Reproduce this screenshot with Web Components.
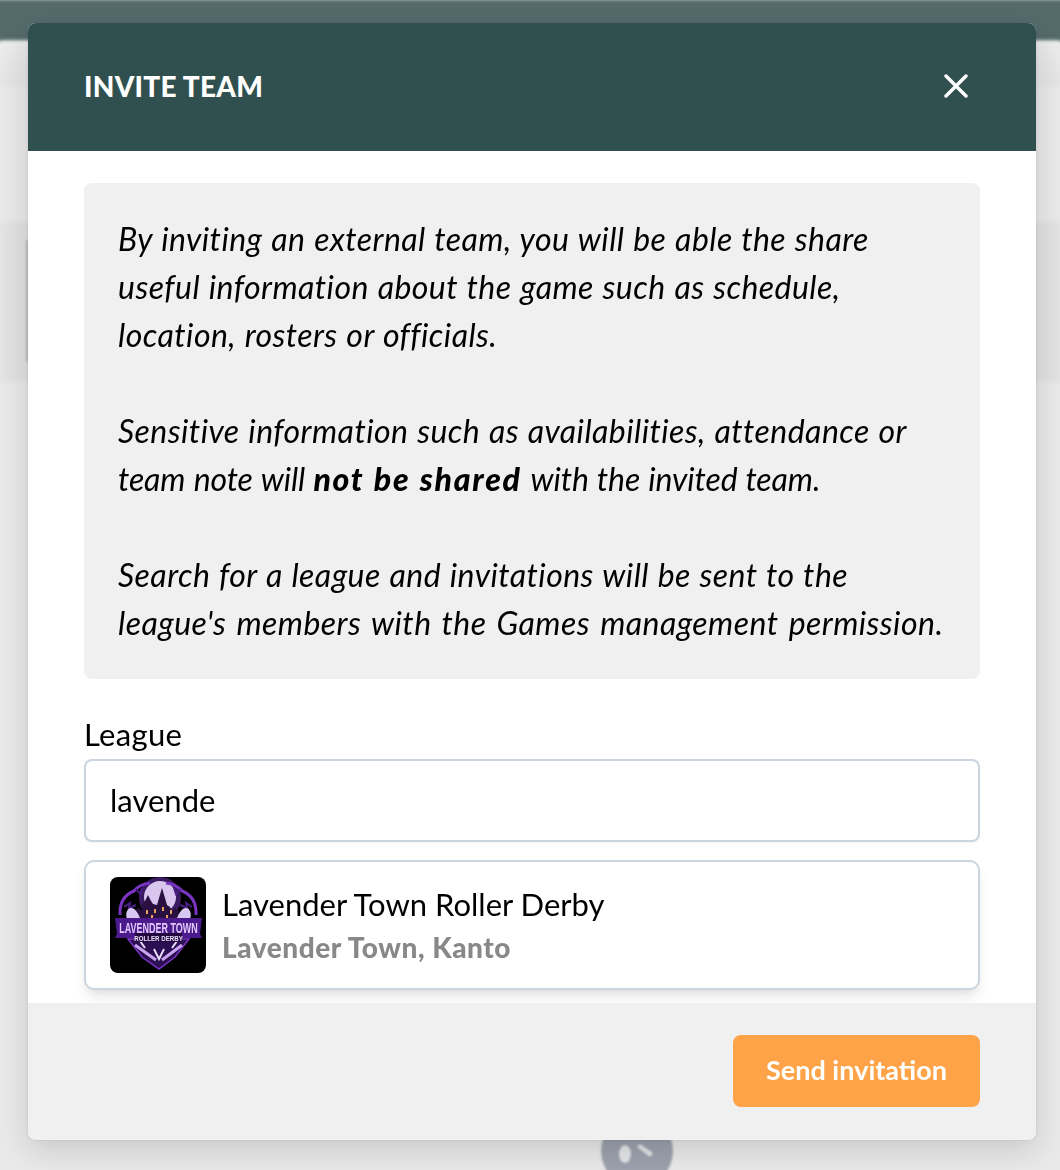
<!DOCTYPE html>
<html lang="en">
<head>
<meta charset="utf-8">
<title>Invite team</title>
<style>
  html, body { margin: 0; height: 100%; }
  body { font-family: "Lato", "Open Sans", sans-serif; background: #e9e9e9; overflow: hidden; }
  info-box b { font-weight: 900; letter-spacing: 1.75px; }
  info-box .tight { letter-spacing: -.1px; }
  info-box .wide { word-spacing: 2.2px; }
</style>
</head>
<body>
<page-backdrop></page-backdrop>
<invite-modal title="INVITE TEAM">
  <info-box>
    <p>By inviting an external team, you will be able the share<br>useful information about the game such as schedule,<br>location, rosters or officials.</p>
    <p>Sensitive information such as availabilities, attendance or<br><span class="tight">team note will </span><b>not be shared</b> <span class="tight">with the invited team.</span></p>
    <p>Search for a league and invitations will be sent to the<br><span class="wide">league's members with the Games management permission.</span></p>
  </info-box>
  <league-field label="League" value="lavende"></league-field>
  <league-option name="Lavender Town Roller Derby" place="Lavender Town, Kanto"></league-option>
  <send-button slot="footer">Send invitation</send-button>
</invite-modal>

<script>
// page behind the modal, dimmed and out of focus
class PageBackdrop extends HTMLElement {
  constructor() {
    super();
    this.attachShadow({ mode: 'open' });
    this.shadowRoot.innerHTML = `
      <style>
        :host { display: block; position: fixed; inset: 0; background: #e9e9e9; overflow: hidden; }
        .bar { height: 41px; background: #546a6b; filter: blur(1.5px); transform: scale(1.02); }
        .strip { height: 45px; background: linear-gradient(#ececec, #e3e3e3); filter: blur(2px); }
        .card { position: absolute; left: 0; top: 222px; width: 100%; height: 160px; background: #e1e1e1; filter: blur(2px); }
        .edge { position: absolute; left: 26px; top: 240px; width: 3px; height: 122px; background: #bcbcbc; filter: blur(1px); }
        .avatar { position: absolute; left: 600px; top: 1114px; filter: blur(1px); }
      </style>
      <div class="bar"></div>
      <div class="strip"></div>
      <div class="card"></div>
      <div class="edge"></div>
      <svg class="avatar" width="74" height="74" viewBox="0 0 74 74">
        <circle cx="37" cy="37" r="36" fill="#9ca1ad"/>
        <ellipse cx="25" cy="40" rx="6" ry="9" fill="#e4e5e8"/>
        <path d="M37 33l3-3 13 9-3 4z" fill="#e4e5e8"/>
      </svg>`;
  }
}

class InviteModal extends HTMLElement {
  constructor() {
    super();
    this.attachShadow({ mode: 'open' });
    this.shadowRoot.innerHTML = `
      <style>
        :host {
          display: flex;
          flex-direction: column;
          position: absolute;
          left: 28px;
          top: 23px;
          width: 1008px;
          height: 1117px;
          border-radius: 8px;
          overflow: hidden;
          background: #fff;
          box-shadow: 0 10px 30px rgba(0,0,0,.14), 0 0 3px rgba(0,0,0,.12);
        }
        header {
          flex: 0 0 128px;
          box-sizing: border-box;
          display: flex;
          align-items: center;
          justify-content: space-between;
          padding: 0 68px 2px 56px;
          background: #30504f;
          color: #fff;
        }
        h2 { margin: 0; font-size: 28px; font-weight: 900; letter-spacing: .25px; }
        svg { display: block; }
        .body { flex: 1; min-height: 0; padding: 32px 56px 0; }
        footer {
          flex: 0 0 137px;
          box-sizing: border-box;
          display: flex;
          justify-content: flex-end;
          padding: 32px 56px;
          background: #f0f0f0;
        }
      </style>
      <header>
        <h2 id="title"></h2>
        <svg width="24" height="24" viewBox="0 0 24 24" fill="none" stroke="#fff" stroke-width="3.4" stroke-linecap="round"><path d="M2 2l20 20M22 2L2 22"/></svg>
      </header>
      <div class="body"><slot></slot></div>
      <footer><slot name="footer"></slot></footer>`;
    this.shadowRoot.getElementById('title').textContent = this.getAttribute('title');
  }
}

class InfoBox extends HTMLElement {
  constructor() {
    super();
    this.attachShadow({ mode: 'open' });
    this.shadowRoot.innerHTML = `
      <style>
        :host {
          display: block;
          box-sizing: border-box;
          height: 496px;
          padding: 32px 20px 0 34px;
          border-radius: 8px;
          background: #f0f0f0;
          color: #000;
          font-style: italic;
          font-size: 32px;
          line-height: 48px;
          letter-spacing: .45px;
          word-spacing: .8px;
          white-space: nowrap;
        }
        ::slotted(p) { margin: 0 0 48px; }
        ::slotted(p:last-child) { margin-bottom: 0; }
      </style>
      <slot></slot>`;
  }
}

class LeagueField extends HTMLElement {
  constructor() {
    super();
    this.attachShadow({ mode: 'open' });
    this.shadowRoot.innerHTML = `
      <style>
        :host { display: block; margin-top: 32px; }
        label { display: block; height: 48px; font-size: 31px; line-height: 47px; letter-spacing: .3px; color: #000; }
        input {
          display: block;
          box-sizing: border-box;
          width: 100%;
          height: 83px;
          padding: 0 24px 2px;
          border: 2px solid #cbd5e0;
          border-radius: 8px;
          background: #fff;
          color: #000;
          font: 31px "Lato", "Open Sans", sans-serif;
          box-shadow: 0 1px 2px rgba(0,0,0,.05);
          outline: none;
        }
      </style>
      <label id="l"></label>
      <input id="i" type="text">`;
    this.shadowRoot.getElementById('l').textContent = this.getAttribute('label');
    this.shadowRoot.getElementById('i').value = this.getAttribute('value');
  }
}

class LeagueOption extends HTMLElement {
  constructor() {
    super();
    this.attachShadow({ mode: 'open' });
    this.shadowRoot.innerHTML = `
      <style>
        :host {
          display: flex;
          align-items: center;
          gap: 16px;
          box-sizing: border-box;
          height: 130px;
          margin-top: 18px;
          padding: 0 24px;
          border: 2px solid #cbd5e0;
          border-radius: 10px;
          background: #fff;
          box-shadow: 0 10px 15px -3px rgba(0,0,0,.1), 0 4px 6px -2px rgba(0,0,0,.05);
        }
        svg { flex: 0 0 96px; border-radius: 8px; }
        .name { font-size: 31px; line-height: 44px; color: #000; }
        .place { font-size: 28px; line-height: 42px; font-weight: 900; letter-spacing: .55px; color: #888; }
      </style>
      <svg width="96" height="96" viewBox="0 0 96 96">
        <rect width="96" height="96" fill="#000"/>
        <circle cx="50" cy="21" r="21" fill="#6a2fb0" opacity=".55"/>
        <circle cx="50" cy="20" r="16" fill="#d8c6ee"/>
        <path d="M10 38Q9 20 24 14Q30 7 40 6M86 38Q87 20 72 14Q66 7 56 6" fill="none" stroke="#7b35c4" stroke-width="3"/>
        <path d="M14 30l6-4-1 5 7-3M82 30l-6-4 1 5-7-3M26 12l4 5 2-6M70 12l-4 5-2-6" fill="none" stroke="#4a1d87" stroke-width="2"/>
        <path d="M25 44V33l4-2 3 3V27l3-3 3-6 3 6 2 3 4 1 2-7 3-10 3 10 2 7 3 2 2 4 3-3 4 3v11z" fill="#2a1040"/>
        <path d="M36 33h2v4h-2zM44 32h2v4h-2zM52 30h2v4h-2zM60 33h2v4h-2zM41 38h2v3h-2zM56 38h2v3h-2z" fill="#e8a15a"/>
        <path d="M17 42c-2-5 0-11 4-11s7 5 9 10z" fill="#d9c7f3"/>
        <path d="M80 42c2-5 0-11-4-11s-7 5-9 10z" fill="#d9c7f3"/>
        <path d="M18 62h61L65 80 49 92 32 80z" fill="#2c0f52" stroke="#7b35c4" stroke-width="1.5"/>
        <path d="M25 68l21 15M72 68L52 83" stroke="#c9a5ef" stroke-width="3"/>
        <path d="M30 64l5 7M67 64l-5 7M44 72l5 10 5-10" stroke="#e8dcf8" stroke-width="2" fill="none"/>
        <path d="M5 41h87l-2 16 2 4H5l2-4z" fill="#4b1a8c"/>
        <path d="M25 56h47v9H25z" fill="#23083f"/>
        <text transform="translate(48.5 55.5) scale(.64 1)" text-anchor="middle" font-family="Liberation Sans, sans-serif" font-size="14" font-weight="700" fill="#e2c9fb">LAVENDER TOWN</text>
        <text transform="translate(48.5 63.5) scale(.95 1)" text-anchor="middle" font-family="Liberation Sans, sans-serif" font-size="6.5" font-weight="700" fill="#f0e6ff">ROLLER DERBY</text>
      </svg>
      <div>
        <div class="name" id="n"></div>
        <div class="place" id="p"></div>
      </div>`;
    this.shadowRoot.getElementById('n').textContent = this.getAttribute('name');
    this.shadowRoot.getElementById('p').textContent = this.getAttribute('place');
  }
}

class SendButton extends HTMLElement {
  constructor() {
    super();
    this.attachShadow({ mode: 'open' });
    this.shadowRoot.innerHTML = `
      <style>
        :host {
          display: flex;
          align-items: center;
          justify-content: center;
          box-sizing: border-box;
          width: 247px;
          height: 72px;
          padding-bottom: 3px;
          border-radius: 8px;
          background: #ffa348;
          color: #fff;
          font-size: 27px;
          font-weight: 700;
        }
      </style>
      <slot></slot>`;
  }
}

customElements.define('page-backdrop', PageBackdrop);
customElements.define('invite-modal', InviteModal);
customElements.define('info-box', InfoBox);
customElements.define('league-field', LeagueField);
customElements.define('league-option', LeagueOption);
customElements.define('send-button', SendButton);
</script>
</body>
</html>
